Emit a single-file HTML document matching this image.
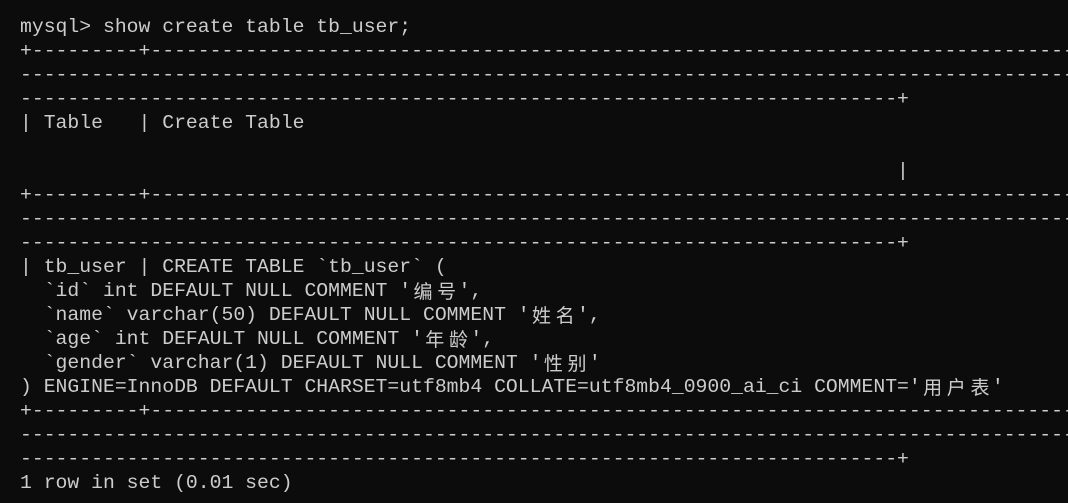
<!DOCTYPE html>
<html><head><meta charset="utf-8"><style>
html,body{margin:0;padding:0;background:#0c0c0c;width:1068px;height:503px;overflow:hidden}
pre{margin:0;position:absolute;left:20px;top:15px;font-family:"Liberation Mono","Noto Sans CJK SC",monospace;font-size:19.75px;line-height:24px;color:#cccccc;white-space:pre;letter-spacing:0}
.c{display:inline-block;width:23.7px;height:24px;line-height:24px;vertical-align:top;overflow:hidden;text-align:center;font-family:"Noto Sans CJK SC",sans-serif;font-size:19px}
</style></head><body><pre>mysql&gt; show create table tb_user;
+---------+--------------------------------------------------------------------------------
-------------------------------------------------------------------------------------------
--------------------------------------------------------------------------+
| Table   | Create Table

                                                                          |
+---------+--------------------------------------------------------------------------------
-------------------------------------------------------------------------------------------
--------------------------------------------------------------------------+
| tb_user | CREATE TABLE `tb_user` (
  `id` int DEFAULT NULL COMMENT '<span class="c">编</span><span class="c">号</span>',
  `name` varchar(50) DEFAULT NULL COMMENT '<span class="c">姓</span><span class="c">名</span>',
  `age` int DEFAULT NULL COMMENT '<span class="c">年</span><span class="c">龄</span>',
  `gender` varchar(1) DEFAULT NULL COMMENT '<span class="c">性</span><span class="c">别</span>'
) ENGINE=InnoDB DEFAULT CHARSET=utf8mb4 COLLATE=utf8mb4_0900_ai_ci COMMENT='<span class="c">用</span><span class="c">户</span><span class="c">表</span>'
+---------+--------------------------------------------------------------------------------
-------------------------------------------------------------------------------------------
--------------------------------------------------------------------------+
1 row in set (0.01 sec)</pre></body></html>
